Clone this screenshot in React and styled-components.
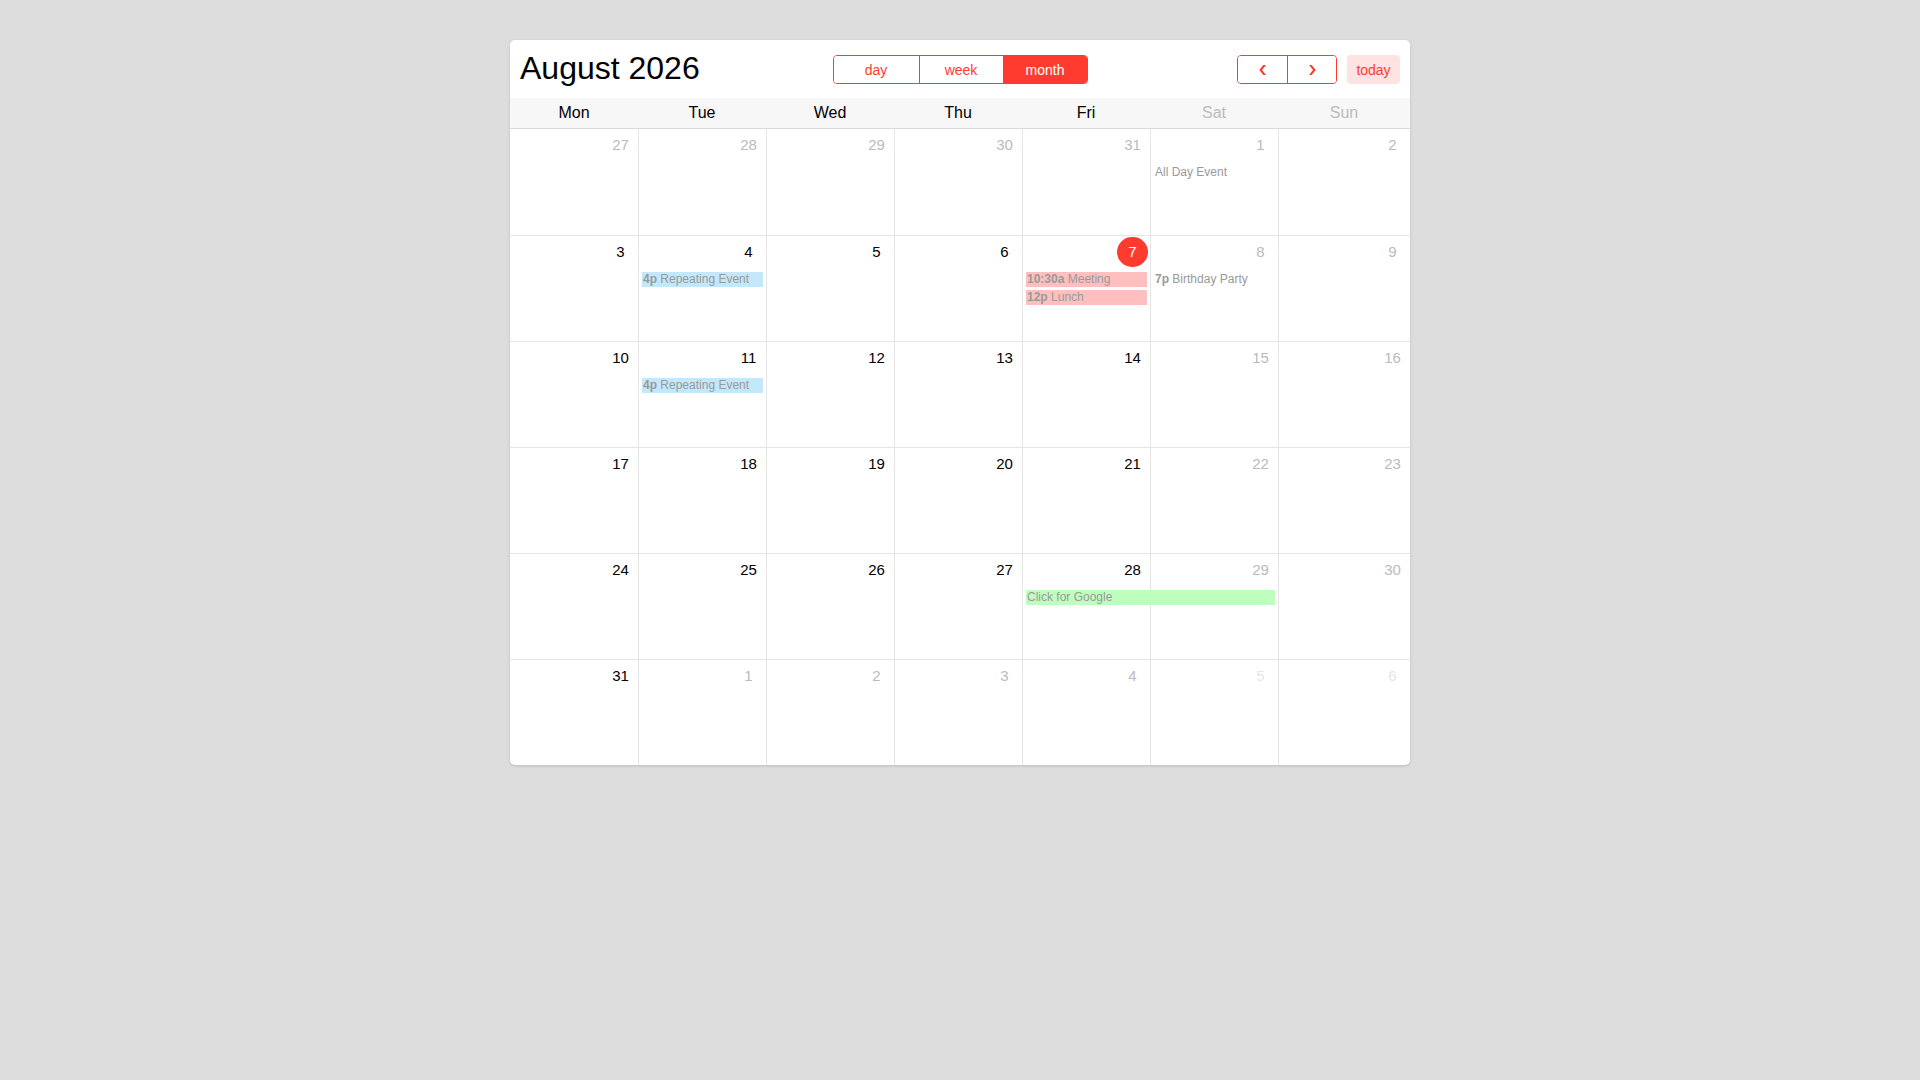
import React from "react";
import styled, { createGlobalStyle } from "styled-components";

const GlobalStyle = createGlobalStyle`
  html, body {
    margin: 0;
    padding: 0;
    background: #dddddd;
    font-family: "Liberation Sans", Arial, Helvetica, sans-serif;
  }
  * { box-sizing: border-box; }
`;

const RED = "#ff3b30";

const Card = styled.div`
  width: 900px;
  margin: 40px auto;
  background: #fff;
  border-radius: 5px;
  box-shadow: 0 1px 3px rgba(0, 0, 0, 0.15);
  overflow: hidden;
`;

const Toolbar = styled.div`
  height: 58px;
  display: grid;
  grid-template-columns: 1fr auto 1fr;
  align-items: start;
  padding: 0 10px;
`;

const Title = styled.h1`
  margin: 10px 0 0;
  font-size: 32px;
  font-weight: 400;
  line-height: 37px;
  color: #000;
`;

const Group = styled.div`
  display: flex;
  margin-top: 15px;
  border: 1px solid ${RED};
  border-radius: 4px;
  overflow: hidden;
  height: 29px;
`;

const Right = styled.div`
  display: flex;
  justify-content: flex-end;
  gap: 10px;
`;

const Btn = styled.button`
  width: ${(p) => p.$w}px;
  height: 27px;
  border: none;
  border-left: ${(p) => (p.$first ? "none" : `1px solid ${RED}`)};
  background: ${(p) => (p.$active ? RED : "#fff")};
  color: ${(p) => (p.$active ? "#fff" : RED)};
  font-family: inherit;
  font-size: 14px;
  padding: 0;
  display: flex;
  align-items: center;
  justify-content: center;
  cursor: pointer;
`;

const TodayBtn = styled.button`
  margin-top: 15px;
  width: 53px;
  height: 29px;
  border: none;
  border-radius: 4px;
  background: #ffe2e2;
  color: ${RED};
  font-family: inherit;
  font-size: 14px;
  padding: 0;
  cursor: pointer;
`;

const DayHeader = styled.div`
  display: grid;
  grid-template-columns: repeat(6, 128px) 1fr;
  height: 30px;
  background: #f7f7f7;
`;

const DayName = styled.div`
  text-align: center;
  font-size: 16px;
  line-height: 29px;
  color: ${(p) => (p.$weekend ? "#bbb" : "#000")};
`;

const Week = styled.div`
  display: grid;
  grid-template-columns: repeat(6, 128px) 1fr;
  grid-template-rows: 36px 18px 18px 1fr;
  height: ${(p) => (p.$first ? 107 : 106)}px;
  border-top: 1px solid ${(p) => (p.$first ? "#d9d9d9" : "#e5e5e5")};
`;

const Cell = styled.div`
  grid-row: 1 / -1;
  grid-column: ${(p) => p.$col};
  border-left: ${(p) => (p.$col === 1 ? "none" : "1px solid #e5e5e5")};
`;

const DayNum = styled.div`
  grid-row: 1;
  grid-column: ${(p) => p.$col};
  justify-self: end;
  margin: 1px 2px 0 0;
  min-width: 31px;
  height: 30px;
  line-height: 30px;
  text-align: center;
  font-size: 15px;
  border-radius: 15px;
  background: ${(p) => (p.$today ? RED : "transparent")};
  color: ${(p) => p.$color};
`;

const Event = styled.div`
  grid-row: ${(p) => p.$row};
  grid-column: ${(p) => p.$col} / span ${(p) => p.$span || 1};
  height: 15px;
  margin: 0 3px 0 4px;
  padding: 0 1px;
  background: ${(p) => p.$bg || "transparent"};
  color: #999;
  font-size: 12px;
  line-height: 15px;
  white-space: nowrap;
  overflow: hidden;
  b { font-weight: 700; }
`;

const Chevron = ({ dir }) => (
  <svg width="7" height="10" viewBox="0 0 7 10">
    <polygon
      points={
        dir === "left"
          ? "4.3,0 7,0 3,5 7,10 4.3,10 0.3,5"
          : "2.7,0 0,0 4,5 0,10 2.7,10 6.7,5"
      }
      fill={RED}
    />
  </svg>
);

const days = ["Mon", "Tue", "Wed", "Thu", "Fri", "Sat", "Sun"];

// weeks of Aug 2026, monday first
const start = new Date(2026, 6, 27);
const weeks = Array.from({ length: 6 }, (_, w) =>
  Array.from({ length: 7 }, (_, d) => {
    const dt = new Date(start);
    dt.setDate(start.getDate() + w * 7 + d);
    return { n: dt.getDate(), inMonth: dt.getMonth() === 7, col: d + 1 };
  })
);

const events = {
  0: [{ col: 6, row: 2, title: "All Day Event" }],
  1: [
    { col: 2, row: 2, time: "4p", title: "Repeating Event", bg: "#c4e8fb" },
    { col: 5, row: 2, time: "10:30a", title: "Meeting", bg: "#ffbfbf" },
    { col: 5, row: 3, time: "12p", title: "Lunch", bg: "#ffbfbf" },
    { col: 6, row: 2, time: "7p", title: "Birthday Party" },
  ],
  2: [{ col: 2, row: 2, time: "4p", title: "Repeating Event", bg: "#c4e8fb" }],
  4: [{ col: 5, span: 2, row: 2, title: "Click for Google", bg: "#bfffbd" }],
};

const numColor = (day) => {
  const weekend = day.col > 5;
  if (day.inMonth) return weekend ? "#bbb" : "#000";
  return weekend ? "#e6e6e6" : "#bbb";
};

const App = () => {
  return (
    <>
      <GlobalStyle />
      <Card>
        <Toolbar>
          <Title>August 2026</Title>
          <Group>
            <Btn $w={85} $first>day</Btn>
            <Btn $w={84}>week</Btn>
            <Btn $w={84} $active>month</Btn>
          </Group>
          <Right>
            <Group>
              <Btn $w={49} $first>
                <Chevron dir="left" />
              </Btn>
              <Btn $w={49}>
                <Chevron dir="right" />
              </Btn>
            </Group>
            <TodayBtn>today</TodayBtn>
          </Right>
        </Toolbar>
        <DayHeader>
          {days.map((d, i) => (
            <DayName key={d} $weekend={i > 4}>
              {d}
            </DayName>
          ))}
        </DayHeader>
        {weeks.map((week, w) => (
          <Week key={w} $first={w === 0}>
            {week.map((day) => (
              <Cell key={"c" + day.col} $col={day.col} />
            ))}
            {week.map((day) => {
              const today = day.inMonth && day.n === 7;
              return (
                <DayNum
                  key={"n" + day.col}
                  $col={day.col}
                  $today={today}
                  $color={today ? "#fff" : numColor(day)}
                >
                  {day.n}
                </DayNum>
              );
            })}
            {(events[w] || []).map((ev, i) => (
              <Event key={i} $col={ev.col} $row={ev.row} $span={ev.span} $bg={ev.bg}>
                {ev.time && <b>{ev.time} </b>}
                {ev.title}
              </Event>
            ))}
          </Week>
        ))}
      </Card>
    </>
  );
};

export default App;
